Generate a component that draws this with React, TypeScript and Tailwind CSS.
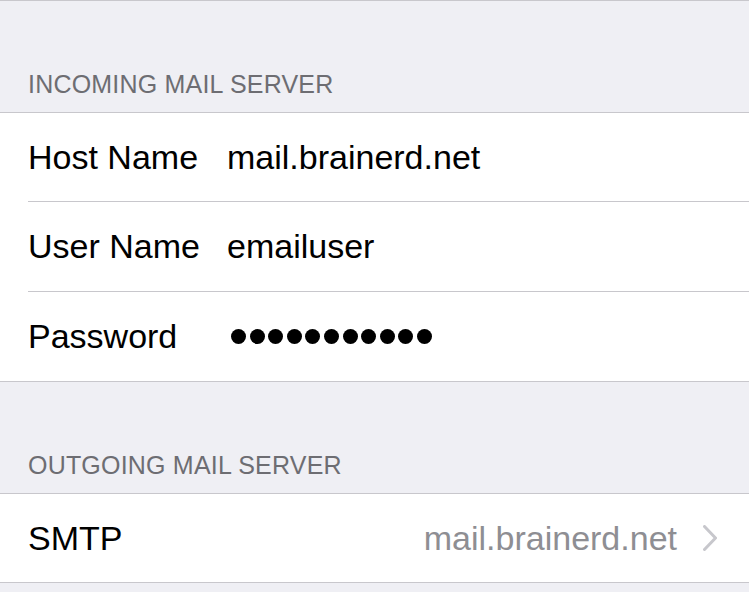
import type { ReactNode } from 'react';

function Header({ children }: { children: ReactNode }) {
  return (
    <div className="flex h-[111px] items-end pb-[15px] pl-[28px] text-[25px] leading-[25px] tracking-[0.2px] text-[#6d6d72]">
      {children}
    </div>
  );
}

function Row({ label, children, first }: { label: string; children: ReactNode; first?: boolean }) {
  return (
    <div className="pl-[28px]">
      <div className={`flex items-center ${first ? 'h-[88px]' : 'h-[90px] border-t border-[#c8c7cc]'}`}>
        <span className="w-[199px] shrink-0 text-[34px] text-black">{label}</span>
        <div className="flex flex-1 items-center">{children}</div>
      </div>
    </div>
  );
}

function Dots({ count }: { count: number }) {
  return (
    <div className="flex items-center gap-[3.6px] pl-[4px]" aria-label="password">
      {Array.from({ length: count }).map((_, i) => (
        <div key={i} className="h-[15px] w-[15px] rounded-full bg-black" />
      ))}
    </div>
  );
}

export default function App() {
  return (
    <div
      className="h-[592px] w-[749px] overflow-hidden border-t border-[#c8c7cc] bg-[#efeff4]"
      style={{ fontFamily: '"Liberation Sans", Arial, sans-serif' }}
    >
      <Header>INCOMING MAIL SERVER</Header>
      <div className="border-y border-[#c8c7cc] bg-white">
        <Row label="Host Name" first>
          <span className="text-[34px] text-black">mail.brainerd.net</span>
        </Row>
        <Row label="User Name">
          <span className="text-[34px] text-black">emailuser</span>
        </Row>
        <Row label="Password">
          <Dots count={11} />
        </Row>
      </div>

      <Header>OUTGOING MAIL SERVER</Header>
      <div className="border-y border-[#c8c7cc] bg-white">
        <div className="flex h-[88px] items-center pl-[28px] pr-[32px]">
          <span className="flex-1 text-[34px] text-black">SMTP</span>
          <span className="text-[34px] text-[#8e8e93]">mail.brainerd.net</span>
          <svg className="ml-[26px]" width="14" height="26" viewBox="0 0 14 26" fill="none">
            <path d="M1.5 1.5 L12.5 13 L1.5 24.5" stroke="#c7c7cc" strokeWidth="3" strokeLinecap="round" strokeLinejoin="round" />
          </svg>
        </div>
      </div>
    </div>
  );
}
